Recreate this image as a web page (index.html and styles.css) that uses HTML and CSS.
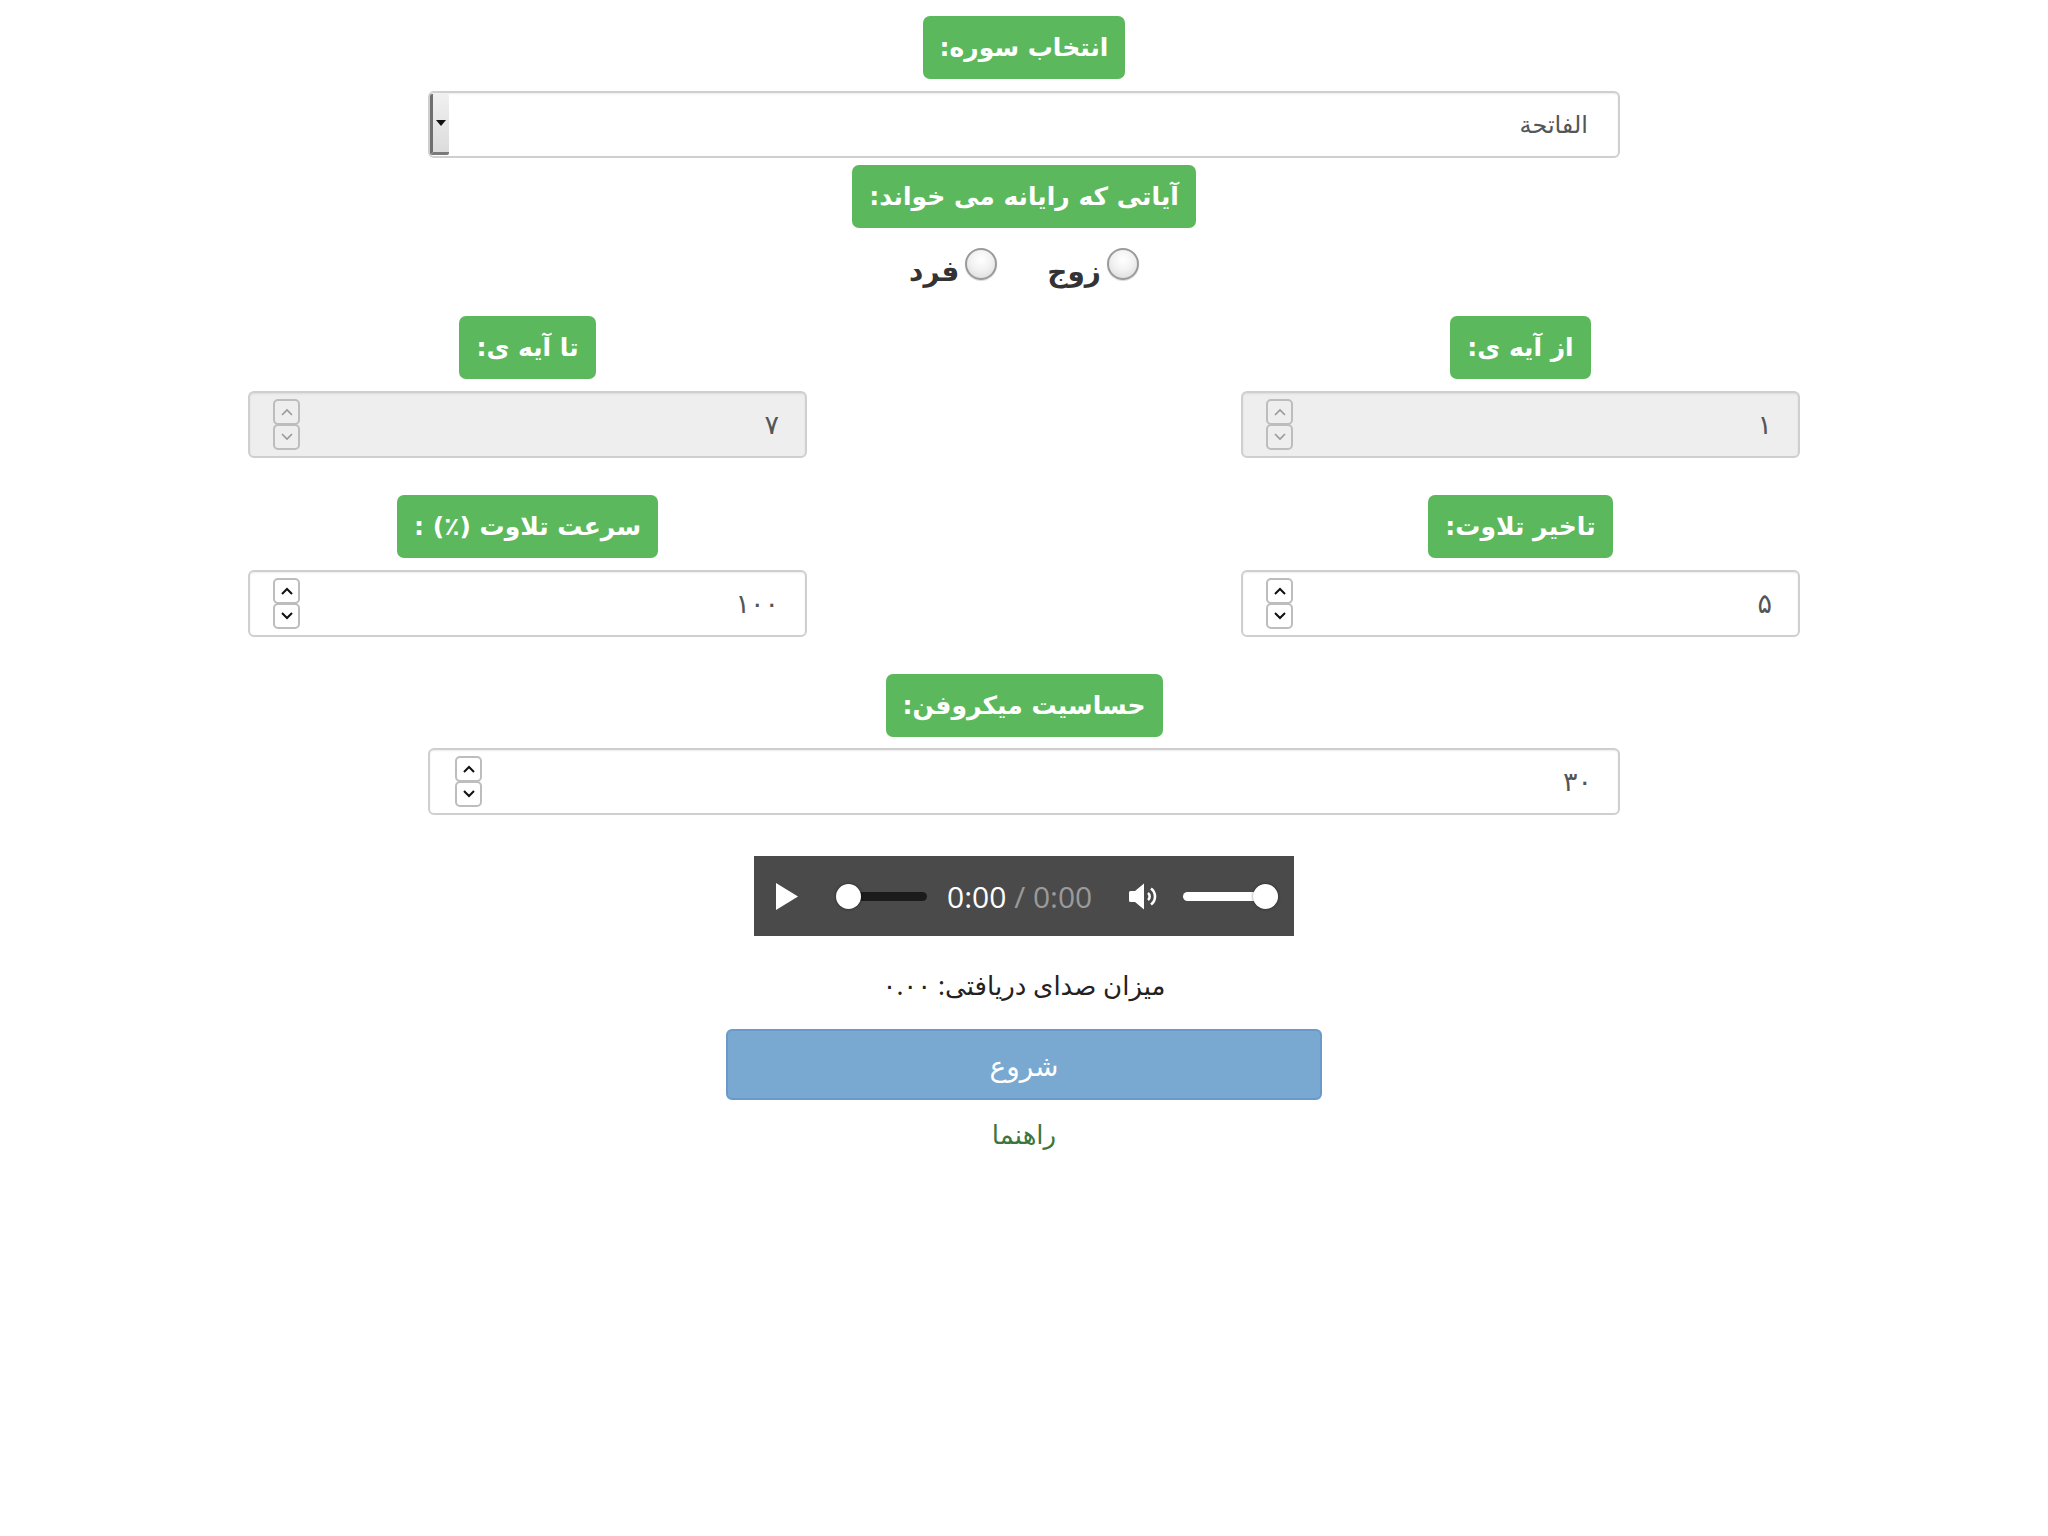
FILE: index.html
```html
<!DOCTYPE html>
<html lang="fa" dir="rtl">
<head>
<meta charset="utf-8">
<title>قرآن</title>
<link rel="stylesheet" href="styles.css">
</head>
<body>
<main class="page">
  <div class="row-center"><span class="tag">انتخاب سوره:</span></div>
  <div class="field field-wide select">
    <span class="value">الفاتحة</span>
    <span class="select-btn"><span class="select-arrow"></span></span>
  </div>
  <div class="row-center tag2-row"><span class="tag">آیاتی که رایانه می خواند:</span></div>
  <div class="radios">
    <label class="radio-item"><span class="radio"></span><span class="radio-text">زوج</span></label>
    <label class="radio-item"><span class="radio"></span><span class="radio-text">فرد</span></label>
  </div>

  <div class="grid">
    <div class="col">
      <span class="tag">از آیه ی:</span>
      <div class="field disabled">
        <span class="value">۱</span>
        <span class="spin">
          <span class="spin-btn"><svg viewBox="0 0 12 8" width="12" height="8"><polyline points="1,7 6,2 11,7"/></svg></span>
          <span class="spin-btn"><svg viewBox="0 0 12 8" width="12" height="8"><polyline points="1,1 6,6 11,1"/></svg></span>
        </span>
      </div>
    </div>
    <div class="col">
      <span class="tag">تا آیه ی:</span>
      <div class="field disabled">
        <span class="value">۷</span>
        <span class="spin">
          <span class="spin-btn"><svg viewBox="0 0 12 8" width="12" height="8"><polyline points="1,7 6,2 11,7"/></svg></span>
          <span class="spin-btn"><svg viewBox="0 0 12 8" width="12" height="8"><polyline points="1,1 6,6 11,1"/></svg></span>
        </span>
      </div>
    </div>
    <div class="col">
      <span class="tag">تاخیر تلاوت:</span>
      <div class="field">
        <span class="value">۵</span>
        <span class="spin">
          <span class="spin-btn"><svg viewBox="0 0 12 8" width="12" height="8"><polyline points="1,7 6,2 11,7"/></svg></span>
          <span class="spin-btn"><svg viewBox="0 0 12 8" width="12" height="8"><polyline points="1,1 6,6 11,1"/></svg></span>
        </span>
      </div>
    </div>
    <div class="col">
      <span class="tag">سرعت تلاوت (٪) :</span>
      <div class="field">
        <span class="value">۱۰۰</span>
        <span class="spin">
          <span class="spin-btn"><svg viewBox="0 0 12 8" width="12" height="8"><polyline points="1,7 6,2 11,7"/></svg></span>
          <span class="spin-btn"><svg viewBox="0 0 12 8" width="12" height="8"><polyline points="1,1 6,6 11,1"/></svg></span>
        </span>
      </div>
    </div>
  </div>

  <div class="row-center mic-row"><span class="tag">حساسیت میکروفن:</span></div>
  <div class="field field-wide mic-field">
    <span class="value">۳۰</span>
    <span class="spin">
      <span class="spin-btn"><svg viewBox="0 0 12 8" width="12" height="8"><polyline points="1,7 6,2 11,7"/></svg></span>
      <span class="spin-btn"><svg viewBox="0 0 12 8" width="12" height="8"><polyline points="1,1 6,6 11,1"/></svg></span>
    </span>
  </div>

  <div class="audio">
    <svg class="play" viewBox="0 0 22 27" width="22" height="27"><polygon points="0,0 22,13.5 0,27" fill="#fff"/></svg>
    <div class="seek"><span class="thumb thumb-start"></span></div>
    <div class="time"><span class="cur">0:00</span><span class="dur"> / 0:00</span></div>
    <svg class="speaker" viewBox="0 0 32 27" width="32" height="27">
      <path d="M0 9.5 Q0 8 1.5 8 H6 L15 0.5 V26.5 L6 19 H1.5 Q0 19 0 17.5 Z" fill="#fff"/>
      <path d="M19 10 A4.5 4.5 0 0 1 19 17" fill="none" stroke="#fff" stroke-width="2.6"/>
      <path d="M22 5.5 A10 10 0 0 1 22 21.5" fill="none" stroke="#fff" stroke-width="2.6"/>
    </svg>
    <div class="volume"><span class="thumb thumb-end"></span></div>
  </div>

  <p class="level">میزان صدای دریافتی: ۰.۰۰</p>
  <div class="row-center"><button class="btn-start" disabled>شروع</button></div>
  <div class="row-center"><a class="help" href="#">راهنما</a></div>
</main>
</body>
</html>
```
FILE: styles.css
```css
* { box-sizing: border-box; }
html, body { margin: 0; padding: 0; background: #fff; }
body {
  direction: rtl;
  font-family: "DejaVu Sans", "Noto Sans", sans-serif;
  color: #333;
}
.page { padding-top: 16px; }
.row-center { display: flex; justify-content: center; }
.tag {
  display: inline-block;
  height: 63px;
  line-height: 63px;
  padding: 0 17px;
  background: #5cb85c;
  color: #fff;
  font-weight: bold;
  font-size: 25px;
  border-radius: 7px;
  white-space: nowrap;
}
.field {
  display: flex;
  align-items: center;
  height: 67px;
  border: 2px solid #cfcfcf;
  border-radius: 6px;
  background: #fff;
  box-shadow: inset 0 1px 2px rgba(0,0,0,0.08);
  padding: 0 26px 0 23px;
}
.field.disabled { background: #eeeeee; }
.field-wide { width: 1192px; margin: 0 auto; }
.value {
  flex: 1;
  font-family: "DejaVu Sans", sans-serif;
  font-size: 27px;
  color: #555;
}
.select { margin-top: 12px; padding: 0 30px 0 0; }
.select .value { font-size: 24px; }
.select-btn {
  align-self: stretch;
  width: 19px;
  margin: 1px 0;
  background: linear-gradient(to bottom, #f0f0f0, #dcdcdc);
  border-left: 3px solid #6f6f6f;
  border-bottom: 3px solid #7a7a7a;
  border-radius: 2px;
  display: flex;
  align-items: center;
  justify-content: center;
}
.select-arrow {
  width: 0; height: 0;
  border-left: 5px solid transparent;
  border-right: 5px solid transparent;
  border-top: 6px solid #111;
}
.tag2-row { margin-top: 7px; }
.radios {
  display: flex;
  justify-content: center;
  gap: 50px;
  height: 88px;
  padding-top: 20px;
}
.radio-item { display: flex; align-items: flex-start; gap: 6px; }
.radio {
  width: 32px; height: 32px;
  border-radius: 50%;
  border: 2px solid #9a9a9a;
  background: radial-gradient(circle at 50% 35%, #ffffff 0%, #f2f2f2 45%, #d6d6d6 100%);
  box-shadow: 0 1px 1px rgba(0,0,0,0.15);
}
.radio-text {
  font-weight: bold;
  font-size: 28px;
  color: #333;
  margin-top: 7px;
}
.grid {
  display: grid;
  grid-template-columns: 559px 559px;
  justify-content: space-between;
  row-gap: 37px;
  padding: 0 248px;
}
.col { display: flex; flex-direction: column; align-items: center; gap: 12px; }
.col .field { width: 100%; }
.spin { display: flex; flex-direction: column; }
.spin-btn {
  width: 27px; height: 26px;
  border: 2px solid #bdbdbd;
  border-radius: 5px;
  display: flex; align-items: center; justify-content: center;
  background: #fff;
}
.spin-btn + .spin-btn { margin-top: -1px; }
.spin-btn polyline { fill: none; stroke: #111; stroke-width: 2; }
.disabled .spin-btn { background: #eee; }
.disabled .spin-btn polyline { stroke: #999; stroke-width: 1.6; }
.mic-row { margin-top: 37px; }
.mic-field { margin-top: 11px; padding-left: 25px; }

.audio {
  direction: ltr;
  width: 540px;
  height: 80px;
  margin: 41px auto 0;
  background: #4a4a4a;
  display: flex;
  align-items: center;
  padding-left: 22px;
}
.play { flex: none; display: block; }
.seek, .volume {
  position: relative;
  height: 9px;
  border-radius: 5px;
  flex: none;
}
.seek { width: 91px; margin-left: 38px; background: #1b1b1b; }
.volume { width: 95px; margin-left: 22px; background: #fff; }
.thumb {
  position: absolute;
  top: -8px;
  width: 25px; height: 25px;
  border-radius: 50%;
  background: #fff;
  box-shadow: 0 0 3px rgba(0,0,0,0.5);
}
.thumb-start { left: 0; }
.thumb-end { right: 0; }
.time {
  margin-left: 20px;
  font-family: "Open Sans", "Noto Sans", sans-serif;
  font-size: 30px;
  color: #fff;
  white-space: nowrap;
  width: 182px;
  flex: none;
}
.time .dur { color: #9a9a9a; }
.speaker { flex: none; display: block; }
.level {
  margin: 27px 0 0;
  text-align: center;
  font-family: "Noto Sans", "DejaVu Sans", sans-serif;
  font-size: 26px;
  line-height: 44px;
  color: #222;
}
.btn-start {
  margin-top: 22px;
  width: 596px;
  height: 71px;
  border: 2px solid #6a9acb;
  border-radius: 6px;
  background: #79a8d0;
  color: #fff;
  font-family: "Noto Sans", "DejaVu Sans", sans-serif;
  font-size: 28px;
  direction: rtl;
}
.help {
  margin-top: 14px;
  font-family: "Noto Sans", "DejaVu Sans", sans-serif;
  font-size: 26px;
  color: #3c763d;
  text-decoration: none;
  line-height: 40px;
}
```
